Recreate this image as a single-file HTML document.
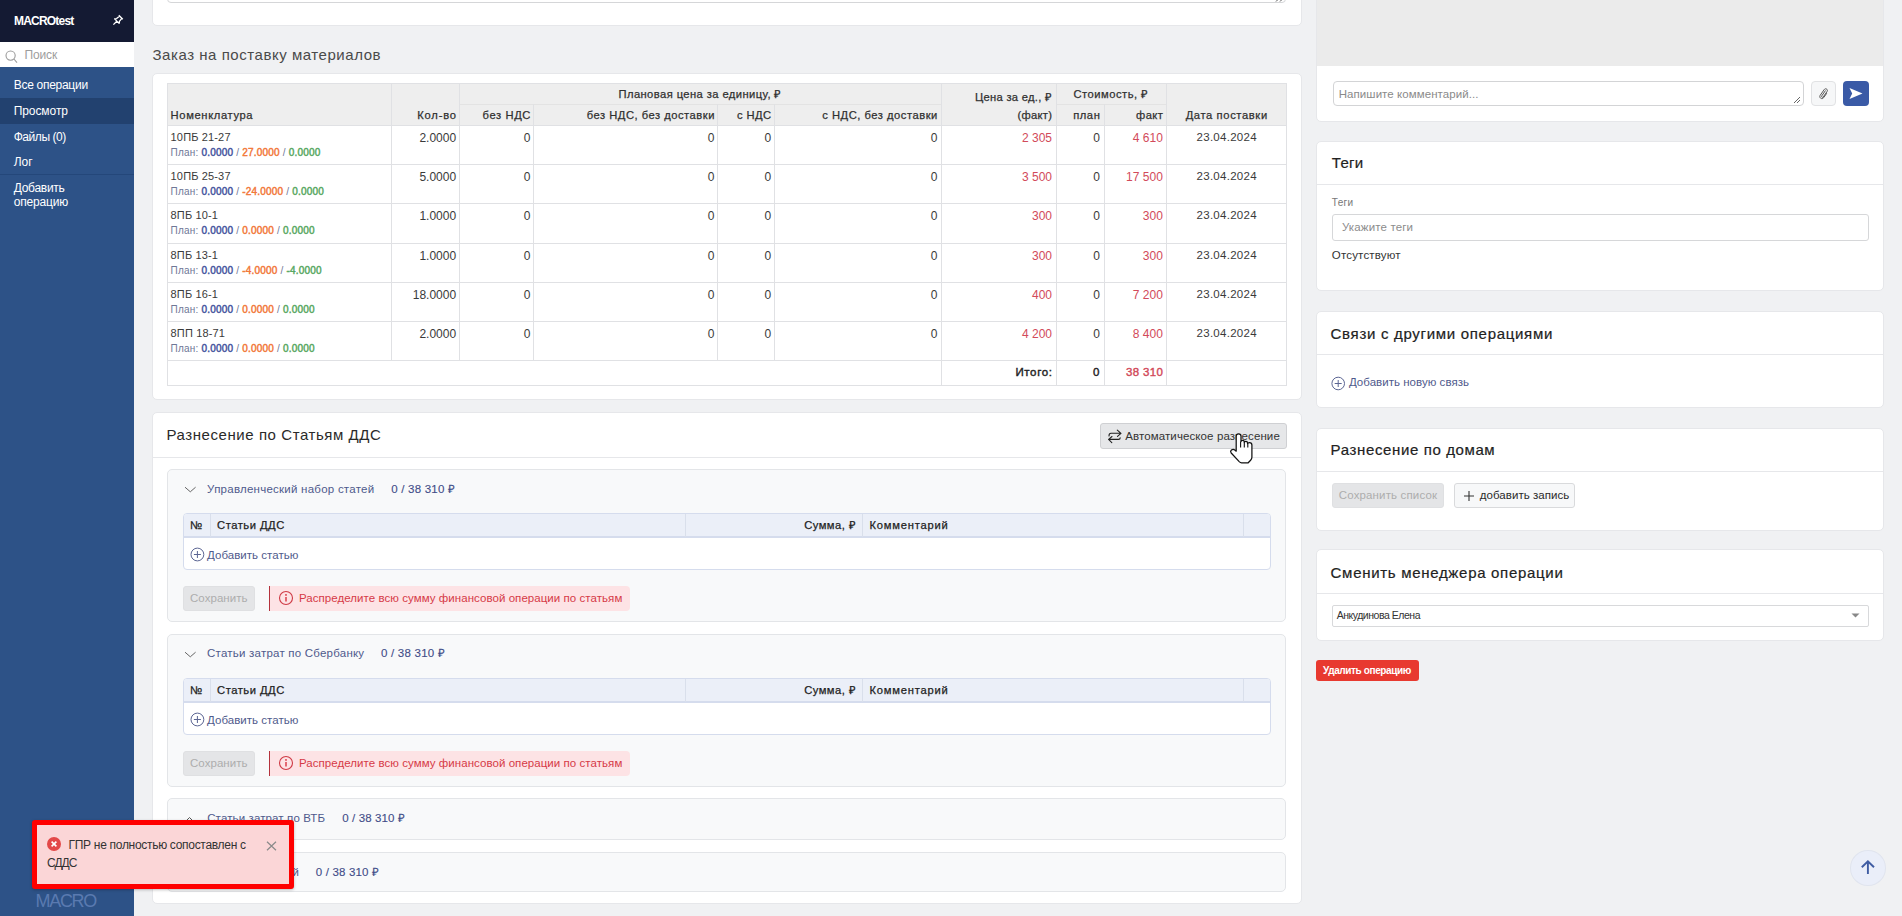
<!DOCTYPE html>
<html><head><meta charset="utf-8"><style>
*{box-sizing:border-box;margin:0;padding:0}
html,body{width:1902px;height:916px;overflow:hidden;background:#f0f1f3;font-family:"Liberation Sans", sans-serif;position:relative}
</style></head><body>
<div style="position:absolute;left:0px;top:0px;width:134px;height:916px;background:#2d5287"></div>
<div style="position:absolute;left:0px;top:0px;width:134px;height:42px;background:#141a33"></div>
<div style="position:absolute;top:15.04px;font-size:12px;line-height:12px;color:#fff;font-weight:bold;white-space:nowrap;letter-spacing:-0.796px;left:14px;">MACROtest</div>
<svg style="position:absolute;left:112px;top:14px" width="12" height="12" viewBox="0 0 12 12"><path d="M6.8 1.2 L10.8 5.2 M7.8 2 L4.6 4.6 L2.6 4.9 L7.1 9.4 L7.4 7.4 L10 4.2 M4.8 7.2 L1.4 10.6" stroke="#fff" stroke-width="1.3" fill="none" stroke-linejoin="round"/></svg>
<div style="position:absolute;left:0px;top:42px;width:134px;height:25px;background:#fff"></div>
<svg style="position:absolute;left:5px;top:50px" width="13" height="14" viewBox="0 0 13 14"><circle cx="5.6" cy="5.6" r="4.6" stroke="#9b9b9b" stroke-width="1.1" fill="none"/><path d="M8.9 9 L12 12.6" stroke="#9b9b9b" stroke-width="1.1"/></svg>
<div style="position:absolute;top:49.14px;font-size:12px;line-height:12px;color:#9d9d9d;font-weight:normal;white-space:nowrap;letter-spacing:-0.141px;left:24.5px;">Поиск</div>
<div style="position:absolute;left:0px;top:98px;width:134px;height:26px;background:#22416f"></div>
<div style="position:absolute;left:0px;top:174px;width:134px;height:1px;background:#24477a"></div>
<div style="position:absolute;top:79.14px;font-size:12px;line-height:12px;color:#fff;font-weight:normal;white-space:nowrap;letter-spacing:-0.280px;left:13.7px;">Все операции</div>
<div style="position:absolute;top:105.14px;font-size:12px;line-height:12px;color:#fff;font-weight:normal;white-space:nowrap;letter-spacing:-0.073px;left:13.7px;">Просмотр</div>
<div style="position:absolute;top:131.04px;font-size:12px;line-height:12px;color:#fff;font-weight:normal;white-space:nowrap;letter-spacing:-0.443px;left:13.7px;">Файлы (0)</div>
<div style="position:absolute;top:155.54px;font-size:12px;line-height:12px;color:#fff;font-weight:normal;white-space:nowrap;letter-spacing:0.031px;left:13.7px;">Лог</div>
<div style="position:absolute;top:181.94px;font-size:12px;line-height:12px;color:#fff;font-weight:normal;white-space:nowrap;letter-spacing:-0.278px;left:13.7px;">Добавить</div>
<div style="position:absolute;top:195.64px;font-size:12px;line-height:12px;color:#fff;font-weight:normal;white-space:nowrap;letter-spacing:-0.183px;left:13.7px;">операцию</div>
<div style="position:absolute;top:891.56px;font-size:18px;line-height:18px;color:#5a7ab0;font-weight:normal;white-space:nowrap;letter-spacing:-1.350px;left:35.6px;">MACRO</div>
<div style="position:absolute;left:152px;top:-20px;width:1150px;height:45.5px;background:#fff;border:1px solid #e6e7ea;border-radius:5px;"></div>
<div style="position:absolute;left:167px;top:-22px;width:1119px;height:24.5px;background:#fff;border:1px solid #d5d6d8;border-radius:4px"></div>
<svg style="position:absolute;left:1270px;top:-10px" width="20" height="12" viewBox="0 0 20 12"><path d="M14.5 3 L6 11.5 M14.5 7 L10 11.5" stroke="#555" stroke-width="1"/></svg>
<div style="position:absolute;top:47.30px;font-size:15px;line-height:15px;color:#4a4a4a;font-weight:normal;white-space:nowrap;letter-spacing:0.542px;left:152.5px;">Заказ на поставку материалов</div>
<div style="position:absolute;left:152px;top:73px;width:1150px;height:326.5px;background:#fff;border:1px solid #e6e7ea;border-radius:5px;"></div>
<div style="position:absolute;left:167px;top:83px;width:1120px;height:42.5px;background:#eeeeee"></div>
<div style="position:absolute;left:167px;top:83px;width:1120px;height:303px;border:1px solid #e0e1e4"></div>
<div style="position:absolute;left:167px;top:125px;width:1120px;height:1px;background:#e0e1e4"></div>
<div style="position:absolute;left:167px;top:164px;width:1120px;height:1px;background:#e0e1e4"></div>
<div style="position:absolute;left:167px;top:203px;width:1120px;height:1px;background:#e0e1e4"></div>
<div style="position:absolute;left:167px;top:243px;width:1120px;height:1px;background:#e0e1e4"></div>
<div style="position:absolute;left:167px;top:282px;width:1120px;height:1px;background:#e0e1e4"></div>
<div style="position:absolute;left:167px;top:321px;width:1120px;height:1px;background:#e0e1e4"></div>
<div style="position:absolute;left:167px;top:360px;width:1120px;height:1px;background:#e0e1e4"></div>
<div style="position:absolute;left:459px;top:104px;width:481.5px;height:1px;background:#e3e3e3"></div>
<div style="position:absolute;left:1055.5px;top:104px;width:110.90000000000009px;height:1px;background:#e3e3e3"></div>
<div style="position:absolute;left:391px;top:83px;width:1px;height:277px;background:#e0e1e4"></div>
<div style="position:absolute;left:459px;top:83px;width:1px;height:277px;background:#e0e1e4"></div>
<div style="position:absolute;left:533px;top:104px;width:1px;height:256px;background:#e0e1e4"></div>
<div style="position:absolute;left:717px;top:104px;width:1px;height:256px;background:#e0e1e4"></div>
<div style="position:absolute;left:774px;top:104px;width:1px;height:256px;background:#e0e1e4"></div>
<div style="position:absolute;left:940.5px;top:83px;width:1px;height:303px;background:#e0e1e4"></div>
<div style="position:absolute;left:1055.5px;top:83px;width:1px;height:303px;background:#e0e1e4"></div>
<div style="position:absolute;left:1103.5px;top:104px;width:1px;height:282px;background:#e0e1e4"></div>
<div style="position:absolute;left:1166.4px;top:83px;width:1px;height:303px;background:#e0e1e4"></div>
<div style="position:absolute;top:109.52px;font-size:11.2px;line-height:11.2px;color:#303030;font-weight:normal;white-space:nowrap;letter-spacing:0.628px;left:170.6px;-webkit-text-stroke:0.25px currentColor">Номенклатура</div>
<div style="position:absolute;top:109.92px;font-size:11.2px;line-height:11.2px;color:#303030;font-weight:normal;white-space:nowrap;letter-spacing:0.821px;right:1445.08px;text-align:right;-webkit-text-stroke:0.25px currentColor">Кол-во</div>
<div style="position:absolute;top:88.72px;font-size:11.2px;line-height:11.2px;color:#303030;font-weight:normal;white-space:nowrap;letter-spacing:0.417px;left:300.20000000000005px;width:800px;text-align:center;-webkit-text-stroke:0.25px currentColor">Плановая цена за единицу, ₽</div>
<div style="position:absolute;top:109.92px;font-size:11.2px;line-height:11.2px;color:#303030;font-weight:normal;white-space:nowrap;letter-spacing:0.594px;right:1371.01px;text-align:right;-webkit-text-stroke:0.25px currentColor">без НДС</div>
<div style="position:absolute;top:109.92px;font-size:11.2px;line-height:11.2px;color:#303030;font-weight:normal;white-space:nowrap;letter-spacing:0.505px;right:1187.09px;text-align:right;-webkit-text-stroke:0.25px currentColor">без НДС, без доставки</div>
<div style="position:absolute;top:109.92px;font-size:11.2px;line-height:11.2px;color:#303030;font-weight:normal;white-space:nowrap;letter-spacing:0.466px;right:1130.33px;text-align:right;-webkit-text-stroke:0.25px currentColor">с НДС</div>
<div style="position:absolute;top:109.92px;font-size:11.2px;line-height:11.2px;color:#303030;font-weight:normal;white-space:nowrap;letter-spacing:0.510px;right:964.19px;text-align:right;-webkit-text-stroke:0.25px currentColor">с НДС, без доставки</div>
<div style="position:absolute;top:91.72px;font-size:11.2px;line-height:11.2px;color:#303030;font-weight:normal;white-space:nowrap;letter-spacing:0.285px;right:849.72px;text-align:right;-webkit-text-stroke:0.25px currentColor">Цена за ед., ₽</div>
<div style="position:absolute;top:110.22px;font-size:11.2px;line-height:11.2px;color:#303030;font-weight:normal;white-space:nowrap;letter-spacing:0.314px;right:849.69px;text-align:right;-webkit-text-stroke:0.25px currentColor">(факт)</div>
<div style="position:absolute;top:88.72px;font-size:11.2px;line-height:11.2px;color:#303030;font-weight:normal;white-space:nowrap;letter-spacing:0.488px;left:711.0999999999999px;width:800px;text-align:center;-webkit-text-stroke:0.25px currentColor">Стоимость, ₽</div>
<div style="position:absolute;top:110.22px;font-size:11.2px;line-height:11.2px;color:#303030;font-weight:normal;white-space:nowrap;letter-spacing:0.533px;right:801.67px;text-align:right;-webkit-text-stroke:0.25px currentColor">план</div>
<div style="position:absolute;top:110.22px;font-size:11.2px;line-height:11.2px;color:#303030;font-weight:normal;white-space:nowrap;letter-spacing:0.407px;right:738.79px;text-align:right;-webkit-text-stroke:0.25px currentColor">факт</div>
<div style="position:absolute;top:110.22px;font-size:11.2px;line-height:11.2px;color:#303030;font-weight:normal;white-space:nowrap;letter-spacing:0.620px;left:826.7px;width:800px;text-align:center;-webkit-text-stroke:0.25px currentColor">Дата поставки</div>
<div style="position:absolute;top:132.49px;font-size:11px;line-height:11px;color:#3a3a3a;font-weight:normal;white-space:nowrap;left:170.6px;letter-spacing:0.15px">10ПБ 21-27</div>
<div style="position:absolute;top:148.34px;font-size:10px;line-height:10px;color:#717a93;font-weight:normal;white-space:nowrap;left:170.6px;letter-spacing:0.2px"><span style="color:#6f7796">План:</span> <span style="color:#46559e;-webkit-text-stroke:0.45px #46559e">0.0000</span> <span style="color:#6f7796">/</span> <span style="color:#f2783a;-webkit-text-stroke:0.45px #f2783a">27.0000</span> <span style="color:#6f7796">/</span> <span style="color:#58a862;-webkit-text-stroke:0.45px #58a862">0.0000</span></div>
<div style="position:absolute;top:131.64px;font-size:12px;line-height:12px;color:#3a3a3a;font-weight:normal;white-space:nowrap;right:1445.90px;text-align:right;">2.0000</div>
<div style="position:absolute;top:131.64px;font-size:12px;line-height:12px;color:#3a3a3a;font-weight:normal;white-space:nowrap;right:1371.60px;text-align:right;">0</div>
<div style="position:absolute;top:131.64px;font-size:12px;line-height:12px;color:#3a3a3a;font-weight:normal;white-space:nowrap;right:1187.60px;text-align:right;">0</div>
<div style="position:absolute;top:131.64px;font-size:12px;line-height:12px;color:#3a3a3a;font-weight:normal;white-space:nowrap;right:1130.80px;text-align:right;">0</div>
<div style="position:absolute;top:131.64px;font-size:12px;line-height:12px;color:#3a3a3a;font-weight:normal;white-space:nowrap;right:964.70px;text-align:right;">0</div>
<div style="position:absolute;top:131.64px;font-size:12px;line-height:12px;color:#d24a5a;font-weight:normal;white-space:nowrap;right:850.00px;text-align:right;">2 305</div>
<div style="position:absolute;top:131.64px;font-size:12px;line-height:12px;color:#3a3a3a;font-weight:normal;white-space:nowrap;right:802.20px;text-align:right;">0</div>
<div style="position:absolute;top:131.64px;font-size:12px;line-height:12px;color:#d24a5a;font-weight:normal;white-space:nowrap;right:739.20px;text-align:right;">4 610</div>
<div style="position:absolute;top:132.07px;font-size:11.5px;line-height:11.5px;color:#3a3a3a;font-weight:normal;white-space:nowrap;letter-spacing:0.271px;left:826.7px;width:800px;text-align:center;">23.04.2024</div>
<div style="position:absolute;top:171.49px;font-size:11px;line-height:11px;color:#3a3a3a;font-weight:normal;white-space:nowrap;left:170.6px;letter-spacing:0.15px">10ПБ 25-37</div>
<div style="position:absolute;top:187.34px;font-size:10px;line-height:10px;color:#717a93;font-weight:normal;white-space:nowrap;left:170.6px;letter-spacing:0.2px"><span style="color:#6f7796">План:</span> <span style="color:#46559e;-webkit-text-stroke:0.45px #46559e">0.0000</span> <span style="color:#6f7796">/</span> <span style="color:#f2783a;-webkit-text-stroke:0.45px #f2783a">-24.0000</span> <span style="color:#6f7796">/</span> <span style="color:#58a862;-webkit-text-stroke:0.45px #58a862">0.0000</span></div>
<div style="position:absolute;top:170.64px;font-size:12px;line-height:12px;color:#3a3a3a;font-weight:normal;white-space:nowrap;right:1445.90px;text-align:right;">5.0000</div>
<div style="position:absolute;top:170.64px;font-size:12px;line-height:12px;color:#3a3a3a;font-weight:normal;white-space:nowrap;right:1371.60px;text-align:right;">0</div>
<div style="position:absolute;top:170.64px;font-size:12px;line-height:12px;color:#3a3a3a;font-weight:normal;white-space:nowrap;right:1187.60px;text-align:right;">0</div>
<div style="position:absolute;top:170.64px;font-size:12px;line-height:12px;color:#3a3a3a;font-weight:normal;white-space:nowrap;right:1130.80px;text-align:right;">0</div>
<div style="position:absolute;top:170.64px;font-size:12px;line-height:12px;color:#3a3a3a;font-weight:normal;white-space:nowrap;right:964.70px;text-align:right;">0</div>
<div style="position:absolute;top:170.64px;font-size:12px;line-height:12px;color:#d24a5a;font-weight:normal;white-space:nowrap;right:850.00px;text-align:right;">3 500</div>
<div style="position:absolute;top:170.64px;font-size:12px;line-height:12px;color:#3a3a3a;font-weight:normal;white-space:nowrap;right:802.20px;text-align:right;">0</div>
<div style="position:absolute;top:170.64px;font-size:12px;line-height:12px;color:#d24a5a;font-weight:normal;white-space:nowrap;right:739.20px;text-align:right;">17 500</div>
<div style="position:absolute;top:171.07px;font-size:11.5px;line-height:11.5px;color:#3a3a3a;font-weight:normal;white-space:nowrap;letter-spacing:0.271px;left:826.7px;width:800px;text-align:center;">23.04.2024</div>
<div style="position:absolute;top:210.49px;font-size:11px;line-height:11px;color:#3a3a3a;font-weight:normal;white-space:nowrap;left:170.6px;letter-spacing:0.15px">8ПБ 10-1</div>
<div style="position:absolute;top:226.34px;font-size:10px;line-height:10px;color:#717a93;font-weight:normal;white-space:nowrap;left:170.6px;letter-spacing:0.2px"><span style="color:#6f7796">План:</span> <span style="color:#46559e;-webkit-text-stroke:0.45px #46559e">0.0000</span> <span style="color:#6f7796">/</span> <span style="color:#f2783a;-webkit-text-stroke:0.45px #f2783a">0.0000</span> <span style="color:#6f7796">/</span> <span style="color:#58a862;-webkit-text-stroke:0.45px #58a862">0.0000</span></div>
<div style="position:absolute;top:209.64px;font-size:12px;line-height:12px;color:#3a3a3a;font-weight:normal;white-space:nowrap;right:1445.90px;text-align:right;">1.0000</div>
<div style="position:absolute;top:209.64px;font-size:12px;line-height:12px;color:#3a3a3a;font-weight:normal;white-space:nowrap;right:1371.60px;text-align:right;">0</div>
<div style="position:absolute;top:209.64px;font-size:12px;line-height:12px;color:#3a3a3a;font-weight:normal;white-space:nowrap;right:1187.60px;text-align:right;">0</div>
<div style="position:absolute;top:209.64px;font-size:12px;line-height:12px;color:#3a3a3a;font-weight:normal;white-space:nowrap;right:1130.80px;text-align:right;">0</div>
<div style="position:absolute;top:209.64px;font-size:12px;line-height:12px;color:#3a3a3a;font-weight:normal;white-space:nowrap;right:964.70px;text-align:right;">0</div>
<div style="position:absolute;top:209.64px;font-size:12px;line-height:12px;color:#d24a5a;font-weight:normal;white-space:nowrap;right:850.00px;text-align:right;">300</div>
<div style="position:absolute;top:209.64px;font-size:12px;line-height:12px;color:#3a3a3a;font-weight:normal;white-space:nowrap;right:802.20px;text-align:right;">0</div>
<div style="position:absolute;top:209.64px;font-size:12px;line-height:12px;color:#d24a5a;font-weight:normal;white-space:nowrap;right:739.20px;text-align:right;">300</div>
<div style="position:absolute;top:210.07px;font-size:11.5px;line-height:11.5px;color:#3a3a3a;font-weight:normal;white-space:nowrap;letter-spacing:0.271px;left:826.7px;width:800px;text-align:center;">23.04.2024</div>
<div style="position:absolute;top:250.49px;font-size:11px;line-height:11px;color:#3a3a3a;font-weight:normal;white-space:nowrap;left:170.6px;letter-spacing:0.15px">8ПБ 13-1</div>
<div style="position:absolute;top:266.33px;font-size:10px;line-height:10px;color:#717a93;font-weight:normal;white-space:nowrap;left:170.6px;letter-spacing:0.2px"><span style="color:#6f7796">План:</span> <span style="color:#46559e;-webkit-text-stroke:0.45px #46559e">0.0000</span> <span style="color:#6f7796">/</span> <span style="color:#f2783a;-webkit-text-stroke:0.45px #f2783a">-4.0000</span> <span style="color:#6f7796">/</span> <span style="color:#58a862;-webkit-text-stroke:0.45px #58a862">-4.0000</span></div>
<div style="position:absolute;top:249.64px;font-size:12px;line-height:12px;color:#3a3a3a;font-weight:normal;white-space:nowrap;right:1445.90px;text-align:right;">1.0000</div>
<div style="position:absolute;top:249.64px;font-size:12px;line-height:12px;color:#3a3a3a;font-weight:normal;white-space:nowrap;right:1371.60px;text-align:right;">0</div>
<div style="position:absolute;top:249.64px;font-size:12px;line-height:12px;color:#3a3a3a;font-weight:normal;white-space:nowrap;right:1187.60px;text-align:right;">0</div>
<div style="position:absolute;top:249.64px;font-size:12px;line-height:12px;color:#3a3a3a;font-weight:normal;white-space:nowrap;right:1130.80px;text-align:right;">0</div>
<div style="position:absolute;top:249.64px;font-size:12px;line-height:12px;color:#3a3a3a;font-weight:normal;white-space:nowrap;right:964.70px;text-align:right;">0</div>
<div style="position:absolute;top:249.64px;font-size:12px;line-height:12px;color:#d24a5a;font-weight:normal;white-space:nowrap;right:850.00px;text-align:right;">300</div>
<div style="position:absolute;top:249.64px;font-size:12px;line-height:12px;color:#3a3a3a;font-weight:normal;white-space:nowrap;right:802.20px;text-align:right;">0</div>
<div style="position:absolute;top:249.64px;font-size:12px;line-height:12px;color:#d24a5a;font-weight:normal;white-space:nowrap;right:739.20px;text-align:right;">300</div>
<div style="position:absolute;top:250.07px;font-size:11.5px;line-height:11.5px;color:#3a3a3a;font-weight:normal;white-space:nowrap;letter-spacing:0.271px;left:826.7px;width:800px;text-align:center;">23.04.2024</div>
<div style="position:absolute;top:289.49px;font-size:11px;line-height:11px;color:#3a3a3a;font-weight:normal;white-space:nowrap;left:170.6px;letter-spacing:0.15px">8ПБ 16-1</div>
<div style="position:absolute;top:305.33px;font-size:10px;line-height:10px;color:#717a93;font-weight:normal;white-space:nowrap;left:170.6px;letter-spacing:0.2px"><span style="color:#6f7796">План:</span> <span style="color:#46559e;-webkit-text-stroke:0.45px #46559e">0.0000</span> <span style="color:#6f7796">/</span> <span style="color:#f2783a;-webkit-text-stroke:0.45px #f2783a">0.0000</span> <span style="color:#6f7796">/</span> <span style="color:#58a862;-webkit-text-stroke:0.45px #58a862">0.0000</span></div>
<div style="position:absolute;top:288.64px;font-size:12px;line-height:12px;color:#3a3a3a;font-weight:normal;white-space:nowrap;right:1445.90px;text-align:right;">18.0000</div>
<div style="position:absolute;top:288.64px;font-size:12px;line-height:12px;color:#3a3a3a;font-weight:normal;white-space:nowrap;right:1371.60px;text-align:right;">0</div>
<div style="position:absolute;top:288.64px;font-size:12px;line-height:12px;color:#3a3a3a;font-weight:normal;white-space:nowrap;right:1187.60px;text-align:right;">0</div>
<div style="position:absolute;top:288.64px;font-size:12px;line-height:12px;color:#3a3a3a;font-weight:normal;white-space:nowrap;right:1130.80px;text-align:right;">0</div>
<div style="position:absolute;top:288.64px;font-size:12px;line-height:12px;color:#3a3a3a;font-weight:normal;white-space:nowrap;right:964.70px;text-align:right;">0</div>
<div style="position:absolute;top:288.64px;font-size:12px;line-height:12px;color:#d24a5a;font-weight:normal;white-space:nowrap;right:850.00px;text-align:right;">400</div>
<div style="position:absolute;top:288.64px;font-size:12px;line-height:12px;color:#3a3a3a;font-weight:normal;white-space:nowrap;right:802.20px;text-align:right;">0</div>
<div style="position:absolute;top:288.64px;font-size:12px;line-height:12px;color:#d24a5a;font-weight:normal;white-space:nowrap;right:739.20px;text-align:right;">7 200</div>
<div style="position:absolute;top:289.07px;font-size:11.5px;line-height:11.5px;color:#3a3a3a;font-weight:normal;white-space:nowrap;letter-spacing:0.271px;left:826.7px;width:800px;text-align:center;">23.04.2024</div>
<div style="position:absolute;top:328.49px;font-size:11px;line-height:11px;color:#3a3a3a;font-weight:normal;white-space:nowrap;left:170.6px;letter-spacing:0.15px">8ПП 18-71</div>
<div style="position:absolute;top:344.33px;font-size:10px;line-height:10px;color:#717a93;font-weight:normal;white-space:nowrap;left:170.6px;letter-spacing:0.2px"><span style="color:#6f7796">План:</span> <span style="color:#46559e;-webkit-text-stroke:0.45px #46559e">0.0000</span> <span style="color:#6f7796">/</span> <span style="color:#f2783a;-webkit-text-stroke:0.45px #f2783a">0.0000</span> <span style="color:#6f7796">/</span> <span style="color:#58a862;-webkit-text-stroke:0.45px #58a862">0.0000</span></div>
<div style="position:absolute;top:327.64px;font-size:12px;line-height:12px;color:#3a3a3a;font-weight:normal;white-space:nowrap;right:1445.90px;text-align:right;">2.0000</div>
<div style="position:absolute;top:327.64px;font-size:12px;line-height:12px;color:#3a3a3a;font-weight:normal;white-space:nowrap;right:1371.60px;text-align:right;">0</div>
<div style="position:absolute;top:327.64px;font-size:12px;line-height:12px;color:#3a3a3a;font-weight:normal;white-space:nowrap;right:1187.60px;text-align:right;">0</div>
<div style="position:absolute;top:327.64px;font-size:12px;line-height:12px;color:#3a3a3a;font-weight:normal;white-space:nowrap;right:1130.80px;text-align:right;">0</div>
<div style="position:absolute;top:327.64px;font-size:12px;line-height:12px;color:#3a3a3a;font-weight:normal;white-space:nowrap;right:964.70px;text-align:right;">0</div>
<div style="position:absolute;top:327.64px;font-size:12px;line-height:12px;color:#d24a5a;font-weight:normal;white-space:nowrap;right:850.00px;text-align:right;">4 200</div>
<div style="position:absolute;top:327.64px;font-size:12px;line-height:12px;color:#3a3a3a;font-weight:normal;white-space:nowrap;right:802.20px;text-align:right;">0</div>
<div style="position:absolute;top:327.64px;font-size:12px;line-height:12px;color:#d24a5a;font-weight:normal;white-space:nowrap;right:739.20px;text-align:right;">8 400</div>
<div style="position:absolute;top:328.07px;font-size:11.5px;line-height:11.5px;color:#3a3a3a;font-weight:normal;white-space:nowrap;letter-spacing:0.271px;left:826.7px;width:800px;text-align:center;">23.04.2024</div>
<div style="position:absolute;top:367.27px;font-size:11.5px;line-height:11.5px;color:#222;font-weight:normal;white-space:nowrap;letter-spacing:0.651px;right:849.35px;text-align:right;-webkit-text-stroke:0.4px currentColor">Итого:</div>
<div style="position:absolute;top:367.27px;font-size:11.5px;line-height:11.5px;color:#222;font-weight:normal;white-space:nowrap;right:802.60px;text-align:right;-webkit-text-stroke:0.4px currentColor">0</div>
<div style="position:absolute;top:367.27px;font-size:11.5px;line-height:11.5px;color:#d24a5a;font-weight:normal;white-space:nowrap;letter-spacing:0.362px;right:738.64px;text-align:right;-webkit-text-stroke:0.4px currentColor">38 310</div>
<div style="position:absolute;left:152px;top:412px;width:1150px;height:491.5px;background:#fff;border:1px solid #e6e7ea;border-radius:5px;"></div>
<div style="position:absolute;left:153px;top:457.4px;width:1148px;height:1px;background:#e6e7ea"></div>
<div style="position:absolute;top:427.10px;font-size:15px;line-height:15px;color:#2a2a2a;font-weight:normal;white-space:nowrap;letter-spacing:0.565px;left:166.5px;">Разнесение по Статьям ДДС</div>
<div style="position:absolute;left:1100px;top:423.3px;width:187px;height:25.4px;background:#e6e7e9;border:1px solid #cfd0d3;border-radius:3px"></div>
<svg style="position:absolute;left:1100px;top:420px" width="30" height="30" viewBox="0 0 30 30"><path d="M9 16 Q9 13.3 11 13.3 L21 13.3 M17.3 10.2 L21 13.3 L17.5 16.4 M20.2 17.7 Q20.2 19.4 18.5 19.4 L8.6 19.4 M12 16.5 L8.6 19.4 L11.8 22.6" stroke="#222" stroke-width="1.1" fill="none" stroke-linejoin="round" stroke-linecap="round"/></svg>
<div style="position:absolute;top:431.07px;font-size:11.5px;line-height:11.5px;color:#333;font-weight:normal;white-space:nowrap;letter-spacing:0.100px;left:1125.3px;">Автоматическое разнесение</div>
<div style="position:absolute;left:167px;top:469.4px;width:1118.5px;height:153px;background:#f8f9fa;border:1px solid #e3e5e8;border-radius:5px"></div>
<svg style="position:absolute;left:184px;top:485.9px" width="13" height="8" viewBox="0 0 13 8"><path d="M1 1.2 L6.3 5.8 L11.6 1.2" stroke="#666" stroke-width="1" fill="none"/></svg>
<div style="position:absolute;left:183.3px;top:513.4px;width:1087.4px;height:57px;background:#fff;border:1px solid #d5dced;border-radius:4px"></div>
<div style="position:absolute;left:184.3px;top:514.4px;width:1085.4px;height:24px;background:#ebeff8;border-bottom:2px solid #d5dced;border-radius:3px 3px 0 0"></div>
<div style="position:absolute;left:209.5px;top:514.4px;width:1px;height:23px;background:#d9dfeb"></div>
<div style="position:absolute;left:684.6px;top:514.4px;width:1px;height:23px;background:#d9dfeb"></div>
<div style="position:absolute;left:862.3px;top:514.4px;width:1px;height:23px;background:#d9dfeb"></div>
<div style="position:absolute;left:1242.7px;top:514.4px;width:1px;height:23px;background:#d9dfeb"></div>
<div style="position:absolute;top:520.22px;font-size:11.2px;line-height:11.2px;color:#222;font-weight:normal;white-space:nowrap;left:190px;-webkit-text-stroke:0.25px currentColor">№</div>
<div style="position:absolute;top:520.22px;font-size:11.2px;line-height:11.2px;color:#222;font-weight:normal;white-space:nowrap;letter-spacing:0.510px;left:217.1px;-webkit-text-stroke:0.25px currentColor">Статьи ДДС</div>
<div style="position:absolute;top:520.22px;font-size:11.2px;line-height:11.2px;color:#222;font-weight:normal;white-space:nowrap;letter-spacing:0.461px;right:1045.74px;text-align:right;-webkit-text-stroke:0.25px currentColor">Сумма, ₽</div>
<div style="position:absolute;top:520.22px;font-size:11.2px;line-height:11.2px;color:#222;font-weight:normal;white-space:nowrap;letter-spacing:0.783px;left:869.5px;-webkit-text-stroke:0.25px currentColor">Комментарий</div>
<svg style="position:absolute;left:189.5px;top:547.4px" width="15" height="15" viewBox="0 0 15 15"><circle cx="7.4" cy="7.5" r="6.4" stroke="#5b6593" stroke-width="1" fill="none"/><path d="M7.4 4 V11 M3.9 7.5 H10.9" stroke="#5b6593" stroke-width="1"/></svg>
<div style="position:absolute;top:549.67px;font-size:11.5px;line-height:11.5px;color:#4f5a8c;font-weight:normal;white-space:nowrap;letter-spacing:0.026px;left:207.1px;">Добавить статью</div>
<div style="position:absolute;left:183.3px;top:586.0px;width:71.5px;height:24.5px;background:#e4e5e7;border:1px solid #dfe0e2;border-radius:3px"></div>
<div style="position:absolute;top:592.77px;font-size:11.5px;line-height:11.5px;color:#adadad;font-weight:normal;white-space:nowrap;letter-spacing:0.043px;left:190px;">Сохранить</div>
<div style="position:absolute;left:268.7px;top:586.0px;width:361px;height:24.5px;background:#fde3e5;border-left:1px solid #b4323c;border-radius:0 4px 4px 0"></div>
<svg style="position:absolute;left:277.5px;top:589.5px" width="16" height="16" viewBox="0 0 16 16"><circle cx="8" cy="8" r="6.5" stroke="#cf3a45" stroke-width="1.1" fill="none"/><path d="M8 7 V11.5" stroke="#d8323f" stroke-width="1.4"/><circle cx="8" cy="4.9" r="0.9" fill="#d8323f"/></svg>
<div style="position:absolute;top:592.77px;font-size:11.5px;line-height:11.5px;color:#d63a47;font-weight:normal;white-space:nowrap;letter-spacing:0.053px;left:299px;">Распределите всю сумму финансовой операции по статьям</div>
<div style="position:absolute;top:484.27px;font-size:11.5px;line-height:11.5px;color:#4f5a8c;font-weight:normal;white-space:nowrap;letter-spacing:0.245px;left:207.1px;">Управленческий набор статей</div>
<div style="position:absolute;top:484.27px;font-size:11.5px;line-height:11.5px;color:#414c88;font-weight:normal;white-space:nowrap;letter-spacing:0.222px;left:391.2px;-webkit-text-stroke:0.12px #414c88">0 / 38 310 ₽</div>
<div style="position:absolute;left:167px;top:633.5px;width:1118.5px;height:153.5px;background:#f8f9fa;border:1px solid #e3e5e8;border-radius:5px"></div>
<svg style="position:absolute;left:184px;top:650.9px" width="13" height="8" viewBox="0 0 13 8"><path d="M1 1.2 L6.3 5.8 L11.6 1.2" stroke="#666" stroke-width="1" fill="none"/></svg>
<div style="position:absolute;left:183.3px;top:678.4px;width:1087.4px;height:57px;background:#fff;border:1px solid #d5dced;border-radius:4px"></div>
<div style="position:absolute;left:184.3px;top:679.4px;width:1085.4px;height:24px;background:#ebeff8;border-bottom:2px solid #d5dced;border-radius:3px 3px 0 0"></div>
<div style="position:absolute;left:209.5px;top:679.4px;width:1px;height:23px;background:#d9dfeb"></div>
<div style="position:absolute;left:684.6px;top:679.4px;width:1px;height:23px;background:#d9dfeb"></div>
<div style="position:absolute;left:862.3px;top:679.4px;width:1px;height:23px;background:#d9dfeb"></div>
<div style="position:absolute;left:1242.7px;top:679.4px;width:1px;height:23px;background:#d9dfeb"></div>
<div style="position:absolute;top:685.22px;font-size:11.2px;line-height:11.2px;color:#222;font-weight:normal;white-space:nowrap;left:190px;-webkit-text-stroke:0.25px currentColor">№</div>
<div style="position:absolute;top:685.22px;font-size:11.2px;line-height:11.2px;color:#222;font-weight:normal;white-space:nowrap;letter-spacing:0.510px;left:217.1px;-webkit-text-stroke:0.25px currentColor">Статьи ДДС</div>
<div style="position:absolute;top:685.22px;font-size:11.2px;line-height:11.2px;color:#222;font-weight:normal;white-space:nowrap;letter-spacing:0.461px;right:1045.74px;text-align:right;-webkit-text-stroke:0.25px currentColor">Сумма, ₽</div>
<div style="position:absolute;top:685.22px;font-size:11.2px;line-height:11.2px;color:#222;font-weight:normal;white-space:nowrap;letter-spacing:0.783px;left:869.5px;-webkit-text-stroke:0.25px currentColor">Комментарий</div>
<svg style="position:absolute;left:189.5px;top:712.4px" width="15" height="15" viewBox="0 0 15 15"><circle cx="7.4" cy="7.5" r="6.4" stroke="#5b6593" stroke-width="1" fill="none"/><path d="M7.4 4 V11 M3.9 7.5 H10.9" stroke="#5b6593" stroke-width="1"/></svg>
<div style="position:absolute;top:714.67px;font-size:11.5px;line-height:11.5px;color:#4f5a8c;font-weight:normal;white-space:nowrap;letter-spacing:0.026px;left:207.1px;">Добавить статью</div>
<div style="position:absolute;left:183.3px;top:751.0px;width:71.5px;height:24.5px;background:#e4e5e7;border:1px solid #dfe0e2;border-radius:3px"></div>
<div style="position:absolute;top:757.77px;font-size:11.5px;line-height:11.5px;color:#adadad;font-weight:normal;white-space:nowrap;letter-spacing:0.043px;left:190px;">Сохранить</div>
<div style="position:absolute;left:268.7px;top:751.0px;width:361px;height:24.5px;background:#fde3e5;border-left:1px solid #b4323c;border-radius:0 4px 4px 0"></div>
<svg style="position:absolute;left:277.5px;top:754.5px" width="16" height="16" viewBox="0 0 16 16"><circle cx="8" cy="8" r="6.5" stroke="#cf3a45" stroke-width="1.1" fill="none"/><path d="M8 7 V11.5" stroke="#d8323f" stroke-width="1.4"/><circle cx="8" cy="4.9" r="0.9" fill="#d8323f"/></svg>
<div style="position:absolute;top:757.77px;font-size:11.5px;line-height:11.5px;color:#d63a47;font-weight:normal;white-space:nowrap;letter-spacing:0.053px;left:299px;">Распределите всю сумму финансовой операции по статьям</div>
<div style="position:absolute;top:648.07px;font-size:11.5px;line-height:11.5px;color:#4f5a8c;font-weight:normal;white-space:nowrap;letter-spacing:0.220px;left:207.1px;">Статьи затрат по Сбербанку</div>
<div style="position:absolute;top:648.07px;font-size:11.5px;line-height:11.5px;color:#414c88;font-weight:normal;white-space:nowrap;letter-spacing:0.222px;left:381px;-webkit-text-stroke:0.12px #414c88">0 / 38 310 ₽</div>
<div style="position:absolute;left:167px;top:798.4px;width:1118.5px;height:41.2px;background:#f8f9fa;border:1px solid #e3e5e8;border-radius:5px"></div>
<svg style="position:absolute;left:183px;top:815.5px" width="13" height="8" viewBox="0 0 13 8"><path d="M1.2 6.8 L6.5 1.5 L11.8 6.8" stroke="#555" stroke-width="1" fill="none"/></svg>
<div style="position:absolute;top:813.27px;font-size:11.5px;line-height:11.5px;color:#4f5a8c;font-weight:normal;white-space:nowrap;letter-spacing:0.124px;left:207.2px;">Статьи затрат по ВТБ</div>
<div style="position:absolute;top:813.27px;font-size:11.5px;line-height:11.5px;color:#414c88;font-weight:normal;white-space:nowrap;letter-spacing:0.113px;left:342.3px;-webkit-text-stroke:0.12px #414c88">0 / 38 310 ₽</div>
<div style="position:absolute;left:167px;top:851.8px;width:1118.5px;height:40.5px;background:#f8f9fa;border:1px solid #e3e5e8;border-radius:5px"></div>
<div style="position:absolute;top:866.77px;font-size:11.5px;line-height:11.5px;color:#4f5a8c;font-weight:normal;white-space:nowrap;letter-spacing:-1.190px;left:207.2px;">Прочие набор статей</div>
<div style="position:absolute;top:866.77px;font-size:11.5px;line-height:11.5px;color:#414c88;font-weight:normal;white-space:nowrap;letter-spacing:0.167px;left:315.8px;-webkit-text-stroke:0.12px #414c88">0 / 38 310 ₽</div>
<div style="position:absolute;left:1316px;top:-20px;width:568px;height:141.6px;background:#fff;border:1px solid #e6e7ea;border-radius:5px;"></div>
<div style="position:absolute;left:1317px;top:0px;width:566px;height:66.4px;background:#ebebeb"></div>
<div style="position:absolute;left:1333px;top:81.2px;width:470.5px;height:25.1px;background:#fff;border:1px solid #d3d4d6;border-radius:4px"></div>
<svg style="position:absolute;left:1793px;top:96px" width="8" height="8" viewBox="0 0 8 8"><path d="M7 1 L1 7 M7 4 L4 7" stroke="#666" stroke-width="1"/></svg>
<div style="position:absolute;top:88.57px;font-size:11.5px;line-height:11.5px;color:#8a8a8a;font-weight:normal;white-space:nowrap;letter-spacing:0.072px;left:1338.7px;">Напишите комментарий...</div>
<div style="position:absolute;left:1811.4px;top:81.2px;width:24.2px;height:25.3px;background:#f6f7f8;border:1px solid #e1e2e4;border-radius:4px"></div>
<svg style="position:absolute;left:1817px;top:86px" width="13" height="15" viewBox="0 0 13 15"><path d="M8.5 4.5 L4.8 9.8 C4 11 5.5 12 6.3 10.9 L10 5.6 C11.4 3.6 8.6 1.6 7.2 3.6 L3.2 9.3 C1.6 11.6 5 14 6.6 11.7 L9.8 7.2" stroke="#555" stroke-width="1" fill="none"/></svg>
<div style="position:absolute;left:1843px;top:81.2px;width:25.8px;height:25.3px;background:#3a5aa6;border-radius:4px"></div>
<svg style="position:absolute;left:1848px;top:86px" width="16" height="15" viewBox="0 0 16 15"><path d="M1.5 2 L14.5 7.5 L1.5 13 L4.2 7.5 Z" fill="#fff"/></svg>
<div style="position:absolute;left:1316px;top:140.8px;width:568px;height:150.1px;background:#fff;border:1px solid #e6e7ea;border-radius:5px;"></div>
<div style="position:absolute;left:1317px;top:184px;width:566px;height:1px;background:#e6e7ea"></div>
<div style="position:absolute;top:155.00px;font-size:15px;line-height:15px;color:#222;font-weight:normal;white-space:nowrap;letter-spacing:0.295px;left:1331.8px;-webkit-text-stroke:0.2px currentColor">Теги</div>
<div style="position:absolute;top:197.94px;font-size:10px;line-height:10px;color:#777;font-weight:normal;white-space:nowrap;letter-spacing:0.285px;left:1331.8px;">Теги</div>
<div style="position:absolute;left:1332px;top:214.2px;width:536.6px;height:26.6px;background:#fff;border:1px solid #d6d7d9;border-radius:3px"></div>
<div style="position:absolute;top:222.17px;font-size:11.5px;line-height:11.5px;color:#8c8c8c;font-weight:normal;white-space:nowrap;letter-spacing:0.148px;left:1341.9px;">Укажите теги</div>
<div style="position:absolute;top:250.27px;font-size:11.5px;line-height:11.5px;color:#333;font-weight:normal;white-space:nowrap;letter-spacing:0.182px;left:1331.8px;">Отсутствуют</div>
<div style="position:absolute;left:1316px;top:310.9px;width:568px;height:97.3px;background:#fff;border:1px solid #e6e7ea;border-radius:5px;"></div>
<div style="position:absolute;left:1317px;top:354px;width:566px;height:1px;background:#e6e7ea"></div>
<div style="position:absolute;top:325.70px;font-size:15px;line-height:15px;color:#222;font-weight:normal;white-space:nowrap;letter-spacing:0.697px;left:1330.6px;-webkit-text-stroke:0.2px currentColor">Связи с другими операциями</div>
<svg style="position:absolute;left:1331px;top:375.5px" width="15" height="15" viewBox="0 0 15 15"><circle cx="7.2" cy="7.5" r="6.3" stroke="#5b6593" stroke-width="1" fill="none"/><path d="M7.2 4 V11 M3.7 7.5 H10.7" stroke="#5b6593" stroke-width="1"/></svg>
<div style="position:absolute;top:376.67px;font-size:11.5px;line-height:11.5px;color:#4f5a8c;font-weight:normal;white-space:nowrap;letter-spacing:0.036px;left:1348.9px;">Добавить новую связь</div>
<div style="position:absolute;left:1316px;top:427.5px;width:568px;height:103px;background:#fff;border:1px solid #e6e7ea;border-radius:5px;"></div>
<div style="position:absolute;left:1317px;top:471px;width:566px;height:1px;background:#e6e7ea"></div>
<div style="position:absolute;top:442.30px;font-size:15px;line-height:15px;color:#222;font-weight:normal;white-space:nowrap;letter-spacing:0.622px;left:1330.6px;-webkit-text-stroke:0.2px currentColor">Разнесение по домам</div>
<div style="position:absolute;left:1331.9px;top:483.3px;width:111.7px;height:24.5px;background:#e4e5e7;border:1px solid #dfe0e2;border-radius:3px"></div>
<div style="position:absolute;top:490.27px;font-size:11.5px;line-height:11.5px;color:#adadad;font-weight:normal;white-space:nowrap;letter-spacing:0.143px;left:1338.8px;">Сохранить список</div>
<div style="position:absolute;left:1454px;top:483.3px;width:121.4px;height:24.5px;background:#f7f8f9;border:1px solid #d9dadc;border-radius:3px"></div>
<svg style="position:absolute;left:1463px;top:489.5px" width="12" height="12" viewBox="0 0 12 12"><path d="M6 1 V11 M1 6 H11" stroke="#333" stroke-width="1.1"/></svg>
<div style="position:absolute;top:490.27px;font-size:11.5px;line-height:11.5px;color:#2a2a2a;font-weight:normal;white-space:nowrap;letter-spacing:0.045px;left:1479.8px;">добавить запись</div>
<div style="position:absolute;left:1316px;top:549.2px;width:568px;height:92px;background:#fff;border:1px solid #e6e7ea;border-radius:5px;"></div>
<div style="position:absolute;left:1317px;top:593.3px;width:566px;height:1px;background:#e6e7ea"></div>
<div style="position:absolute;top:564.90px;font-size:15px;line-height:15px;color:#222;font-weight:normal;white-space:nowrap;letter-spacing:0.697px;left:1330.6px;-webkit-text-stroke:0.2px currentColor">Сменить менеджера операции</div>
<div style="position:absolute;left:1331.9px;top:605.1px;width:536.8px;height:21.6px;background:#fff;border:1px solid #d8d9db;border-radius:2px"></div>
<div style="position:absolute;top:609.91px;font-size:10.5px;line-height:10.5px;color:#333;font-weight:normal;white-space:nowrap;letter-spacing:-0.472px;left:1336.7px;">Анкудинова Елена</div>
<svg style="position:absolute;left:1851px;top:613px" width="9" height="5" viewBox="0 0 9 5"><path d="M0.5 0.5 L8.5 0.5 L4.5 4.5 Z" fill="#888"/></svg>
<div style="position:absolute;left:1316.2px;top:660.1px;width:102.5px;height:21.4px;background:#e8392f;border-radius:3px"></div>
<div style="position:absolute;top:665.54px;font-size:10px;line-height:10px;color:#fff;font-weight:bold;white-space:nowrap;letter-spacing:-0.383px;left:1323px;">Удалить операцию</div>
<div style="position:absolute;left:1850.2px;top:850.2px;width:35.6px;height:35.4px;background:#eaeef9;border:1px solid #e0e4ee;border-radius:50%"></div>
<svg style="position:absolute;left:1860px;top:859px" width="16" height="16" viewBox="0 0 16 16"><path d="M7.9 15 V2.5 M1.8 8.3 L7.9 2.3 L14 8.3" stroke="#3f5ca3" stroke-width="1.9" fill="none"/></svg>
<div style="position:absolute;left:32px;top:819.6px;width:261.8px;height:69px;background:#fbd6d7;border:5.5px solid #f00;border-radius:3px;box-shadow:0 1px 3px rgba(0,0,0,0.25)"></div>
<svg style="position:absolute;left:47px;top:837px" width="14" height="14" viewBox="0 0 14 14"><circle cx="7" cy="7" r="7" fill="#e34848"/><path d="M4.6 4.6 L9.4 9.4 M9.4 4.6 L4.6 9.4" stroke="#fff" stroke-width="1.6"/></svg>
<div style="position:absolute;top:839.34px;font-size:12px;line-height:12px;color:#333;font-weight:normal;white-space:nowrap;letter-spacing:-0.301px;left:68.6px;">ГПР не полностью сопоставлен с</div>
<div style="position:absolute;top:857.04px;font-size:12px;line-height:12px;color:#333;font-weight:normal;white-space:nowrap;letter-spacing:-0.976px;left:47px;">СДДС</div>
<svg style="position:absolute;left:265.5px;top:840.5px" width="11" height="10" viewBox="0 0 11 10"><path d="M1 0.7 L10 9.3 M10 0.7 L1 9.3" stroke="#8a8a8a" stroke-width="1.2"/></svg>
<svg style="position:absolute;left:1222px;top:428px" width="40" height="40" viewBox="0 0 40 40"><path d="M14.2 23.2 L14.2 8 Q14.2 5.8 16.6 5.8 Q19 5.8 19 8 L19 13.6 Q19 12.4 20.7 12.4 Q22.3 12.4 22.3 14 L22.3 14.6 Q22.3 13.4 23.9 13.4 Q25.5 13.4 25.5 15 L25.5 15.6 Q25.6 14.5 27.4 14.5 Q29.9 14.5 29.9 17 L29.9 29.3 Q29.9 31 28.6 32.3 L26.2 34.8 L19.6 34.8 Q18.4 34.8 17.2 33.6 L9.2 25 Q7.9 23.4 9.4 22 Q11.2 20.6 12.8 22 Z" fill="#fff" stroke="#111" stroke-width="1.25" stroke-linejoin="round"/><path d="M18.6 13.5 V19.6 M22.3 14.4 V19.6 M25.8 15.2 V19.6" stroke="#111" stroke-width="1.1"/></svg>
</body></html>
